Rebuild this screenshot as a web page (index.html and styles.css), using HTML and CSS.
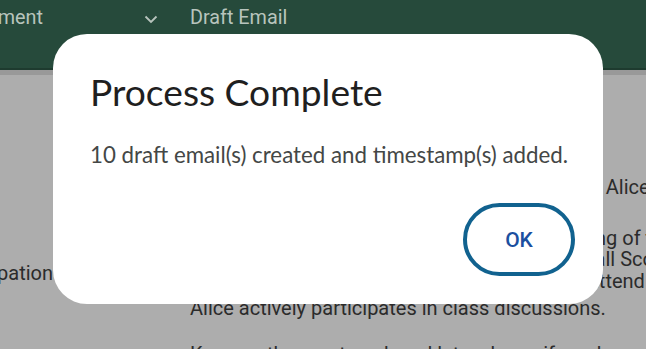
FILE: index.html
```html
<!DOCTYPE html>
<html lang="en">
<head>
  <meta charset="UTF-8" />
  <meta name="viewport" content="width=device-width, initial-scale=1.0" />
  <title>Process Complete</title>
  <link rel="stylesheet" href="styles.css">
</head>
<body>
  <div class="sheet">
    <!-- Column headers -->
    <div class="toolbar">
      <div class="col-a">
        <span class="col-title">Assignment</span>
      </div>
      <div class="col-menu">
        <svg width="14" height="9" viewBox="0 0 14 9"><path d="M1.5 1.5 L7 7 L12.5 1.5" fill="none" stroke="#b8c4bd" stroke-width="1.8"/></svg>
      </div>
      <div class="col-b">Draft Email</div>
    </div>
    <div class="toolbar-edge"></div>

    <!-- Rows (dimmed behind dialog) -->
    <div class="rows">
      <div class="cell-a">
        <span class="cell-text">Class participation</span>
      </div>
      <div class="cell-b">
        <p class="line">Dear Parent, here is a brief progress update on Alice</p>
        <p class="line gap">This year she has shown a sound understanding of the</p>
        <p class="line">material and so has gained a very strong Overall Score</p>
        <p class="line">in every single unit. Alice has been careful to attend</p>
        <p class="line para">Alice actively participates in class discussions.</p>
        <p class="line para-last">Keep up the great work and let us know if you have any questions.</p>
      </div>
    </div>
  </div>

  <!-- Dialog -->
  <div class="backdrop">
    <div class="dialog">
      <h2 class="dialog-title">Process Complete</h2>
      <p class="dialog-text">10 draft email(s) created and timestamp(s) added.</p>
      <div class="dialog-actions">
        <button class="btn-ok">OK</button>
      </div>
    </div>
  </div>
</body>
</html>
```

FILE: styles.css
```css
*, *::before, *::after {
  box-sizing: border-box;
}
body {
  margin: 0;
  width: 646px;
  height: 349px;
  overflow: hidden;
  font-family: Roboto, "Liberation Sans", sans-serif;
  background-color: #adadad;
  color: #2b2b2b;
}
.sheet {
  width: 646px;
}
.toolbar {
  height: 68px;
  background-color: #264a3b;
  display: grid;
  grid-template-columns: 43px 135px 1fr;
  color: #b8c4bd;
  font-size: 19.8px;
}
.col-a {
  display: flex;
  justify-content: flex-end;
  white-space: nowrap;
  padding-top: 6px;
}
.col-menu {
  display: flex;
  justify-content: flex-end;
  padding: 15px 20px 0 0;
}
.col-b {
  padding: 6px 0 0 12px;
  white-space: nowrap;
}
.toolbar-edge {
  height: 7px;
  border-top: 2px solid #1e3b2f;
  background-color: #999;
}
.rows {
  display: grid;
  grid-template-columns: 53px 137px 1fr;
  font-size: 20px;
}
.cell-a {
  display: flex;
  justify-content: flex-end;
  white-space: nowrap;
  padding-top: 186px;
}
.cell-b {
  grid-column: 3;
  white-space: nowrap;
  padding-top: 102px;
}
.line {
  margin: 0;
  line-height: 21.5px;
}
.gap {
  margin-top: 29px;
}
.para {
  margin-top: 6px;
}
.para-last {
  margin-top: 24px;
}

.backdrop {
  position: absolute;
  inset: 0;
}
.dialog {
  position: absolute;
  left: 53px;
  top: 34px;
  width: 550px;
  height: 270px;
  background-color: #fff;
  border-radius: 34px;
  padding: 36px 28px 28px 37px;
  display: flex;
  flex-direction: column;
}
.dialog-title {
  margin: 0;
  font-family: Lato, sans-serif;
  font-weight: 400;
  font-size: 37.2px;
  line-height: 44px;
  color: #1f1f1f;
}
.dialog-text {
  margin: 28px 0 0;
  font-family: Lato, sans-serif;
  font-size: 22.3px;
  line-height: 26px;
  color: #444746;
}
.dialog-actions {
  margin-top: auto;
  display: flex;
  justify-content: flex-end;
}
.btn-ok {
  width: 112px;
  height: 73px;
  border: 4px solid #11628f;
  border-radius: 37px;
  background-color: #fff;
  color: #1b4fa0;
  font-family: Roboto, sans-serif;
  font-size: 21px;
  font-weight: 500;
  cursor: pointer;
}
```
